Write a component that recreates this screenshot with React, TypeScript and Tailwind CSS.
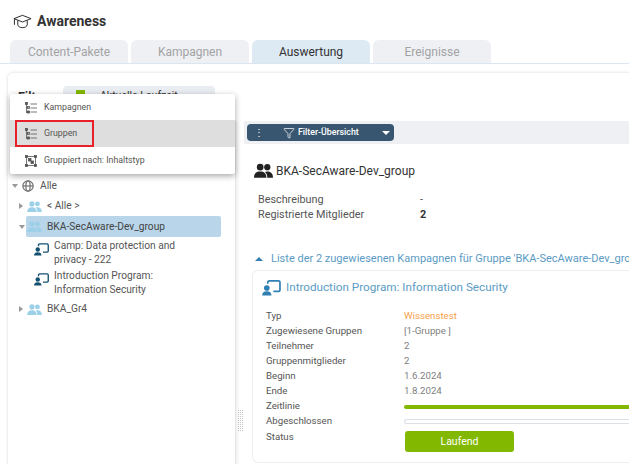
import { Filter } from 'lucide-react'

const tabs = ['Content-Pakete', 'Kampagnen', 'Auswertung', 'Ereignisse']

const details = [
  { label: 'Typ', value: 'Wissenstest', cls: 'text-[#f5a14a]' },
  { label: 'Zugewiesene Gruppen', value: '[1-Gruppe ]', cls: 'text-[#808080]' },
  { label: 'Teilnehmer', value: '2', cls: 'text-[#808080]' },
  { label: 'Gruppenmitglieder', value: '2', cls: 'text-[#808080]' },
  { label: 'Beginn', value: '1.6.2024', cls: 'text-[#808080]' },
  { label: 'Ende', value: '1.8.2024', cls: 'text-[#808080]' },
]

function GroupIcon({ className }: { className: string }) {
  return (
    <svg viewBox="0 0 20 15" className={className} fill="currentColor">
      <circle cx="6.500" cy="4" r="3.500" />
      <circle cx="14" cy="4" r="3.300" />
      <path d="M0 15c0-4.500 2.500-6.500 6.500-6.500S13 10.500 13 15z" />
      <path d="M14 15h6c0-4-2-6.500-6-6.500-1 0-1.800.2-2.500.5 1.600 1.300 2.500 3.300 2.500 6z" />
    </svg>
  )
}

function CampaignIcon({ className }: { className: string }) {
  return (
    <svg viewBox="0 0 20 17" className={className} fill="none">
      <path d="M6 4V2.500C6 1.700 6.700 1 7.500 1h10c.8 0 1.500.7 1.500 1.500v8c0 .8-.7 1.500-1.500 1.500H12" stroke="currentColor" strokeWidth="1.800" />
      <circle cx="5" cy="8.500" r="3" fill="currentColor" />
      <path d="M0 16.500c0-3 2-4.500 5-4.500s5 1.500 5 4.500z" fill="currentColor" />
    </svg>
  )
}

function TreeListIcon() {
  return (
    <svg viewBox="0 0 12 12" className="w-3 h-3 text-[#555]" fill="none" stroke="currentColor" strokeWidth="0.800">
      <path d="M1.500 1v10M1.500 5.500h2M1.500 10h2M5.500 2h6.500M5.500 6h6.500M5.500 10h6.500" />
      <rect x="0.500" y="0.500" width="2" height="2" fill="currentColor" />
      <rect x="2.500" y="4.500" width="2" height="2" />
      <rect x="2.500" y="9" width="2" height="2" fill="currentColor" />
    </svg>
  )
}

function Arrow({ open }: { open?: boolean }) {
  return open ? (
    <span className="block shrink-0 w-0 h-0 border-l-[3px] border-r-[3px] border-t-[4px] border-l-transparent border-r-transparent border-t-[#999]" />
  ) : (
    <span className="block shrink-0 w-0 h-0 border-t-[3px] border-b-[3px] border-l-[4px] border-t-transparent border-b-transparent border-l-[#999]" />
  )
}

function CampaignNode({ lines }: { lines: string[] }) {
  return (
    <div className="flex pl-[26px] h-[30px]">
      <CampaignIcon className="w-[15px] h-[13px] mt-[4px] text-[#14506f] shrink-0" />
      <div className="ml-[5px] text-[10.200px] leading-[14px] text-[#555]">
        {lines.map(l => (
          <div key={l}>{l}</div>
        ))}
      </div>
    </div>
  )
}

export default function App() {
  return (
    <div className="relative w-[629px] h-[464px] overflow-hidden bg-white font-['Roboto',sans-serif]">
      {/* Header */}
      <div className="flex items-center h-[40px] pl-[13px] pt-[2px]">
        <svg viewBox="0 0 20 15" className="w-[19px] h-[15px] text-[#222]" fill="none" stroke="currentColor" strokeWidth="1">
          <path d="M1 4.500 10 1l9 3.500L10 8z" />
          <path d="M5 6.500V11c0 1.500 2.500 3 5 3s5-1.500 5-3V6.500" />
          <path d="M1.500 5v6" />
        </svg>
        <span className="ml-[5px] text-[14px] font-bold text-[#333]">Awareness</span>
      </div>

      {/* Tabs */}
      <div className="flex gap-[3px] pl-[10px] h-[24px] border-b border-[#dbe6f0]">
        {tabs.map((t, i) => (
          <div
            key={t}
            className={`w-[118px] h-[23px] rounded-t-[6px] flex items-center justify-center text-[12px] ${
              i === 2 ? 'bg-[#dde9f3] text-[#333]' : 'bg-[#eef0f4] text-[#a3a3a3]'
            }`}
          >
            {t}
          </div>
        ))}
      </div>

      {/* Filter row */}
      <div className="ml-[7px] mt-[8px] h-[392px] rounded-tl-[6px] border-t border-l border-[#f0f0f0] shadow-[0_0_3px_rgba(0,0,0,0.08)]">
        <div className="flex items-start h-[48px] pl-[10px] pt-[13px]">
          <span className="mt-[3px] w-[45px] text-[12.500px] font-bold text-[#333] leading-[16px]">Filter</span>
          <div className="w-[152px] h-[20px] rounded-[4px] bg-[#e9edf1] flex items-center pl-[13px] text-[10.500px] text-[#333]">
            <span className="w-[9px] h-[13px] bg-[#82b900] mr-[15px] shrink-0" />
            Aktuelle Laufzeit
          </div>
        </div>

        <div className="flex h-[344px]">
          {/* Tree */}
          <div className="w-[228px] h-full pt-[55px] shrink-0 border-r border-[#e4e4e4] shadow-[2px_0_3px_rgba(0,0,0,0.06)]">
            <div className="flex items-center pl-[4px] h-[20px] text-[10.200px] text-[#555]">
              <Arrow open />
              <svg viewBox="0 0 14 14" className="w-[12px] h-[12px] ml-[4px] text-[#777]" fill="none" stroke="currentColor" strokeWidth="1.500">
                <circle cx="7" cy="7" r="6" />
                <ellipse cx="7" cy="7" rx="2.500" ry="6" />
                <path d="M1 7h12" />
              </svg>
              <span className="ml-[6px]">Alle</span>
            </div>
            <div className="flex items-center pl-[11px] h-[20px] text-[10.200px] text-[#555]">
              <Arrow />
              <GroupIcon className="w-[15px] h-[11px] ml-[4px] text-[#9cd0e8]" />
              <span className="ml-[5px]">&lt; Alle &gt;</span>
            </div>
            <div className="relative flex items-center ml-[18px] pl-[1px] w-[195px] h-[21px] rounded-[2px] bg-[#b8d5ea] text-[10.200px] text-[#444]">
              <span className="absolute -left-[7px] top-[9px]"><Arrow open /></span>
              <GroupIcon className="w-[15px] h-[11px] text-[#9cd0e8]" />
              <span className="ml-[5px]">BKA-SecAware-Dev_group</span>
            </div>
            <div className="h-[2px]" />
            <CampaignNode lines={['Camp: Data protection and', 'privacy - 222']} />
            <CampaignNode lines={['Introduction Program:', 'Information Security']} />
            <div className="flex items-center pl-[11px] h-[20px] text-[10.200px] text-[#555]">
              <Arrow />
              <GroupIcon className="w-[15px] h-[11px] ml-[4px] text-[#9cd0e8]" />
              <span className="ml-[5px]">BKA_Gr4</span>
            </div>
          </div>

          {/* Splitter */}
          <div className="w-[8px] shrink-0 flex items-center justify-center pt-[256px]">
            <svg width="5" height="22" className="text-[#c4c4c4]" fill="currentColor">
              <defs>
                <pattern id="grip" width="2" height="2" patternUnits="userSpaceOnUse">
                  <rect width="1" height="1" />
                </pattern>
              </defs>
              <rect width="5" height="22" fill="url(#grip)" />
            </svg>
          </div>

          {/* Details */}
          <div className="flex-1 min-w-0 overflow-hidden">
            <div className="h-[23px] bg-[#eef0f3] flex items-center pl-[3px]">
              <div className="relative w-[147px] h-[17px] rounded-[4px] bg-[#38566f] flex items-center text-white text-[8.800px] font-medium">
                <span className="absolute left-[7px] text-[10px] leading-none">⋮</span>
                <Filter className="w-[12px] h-[12px] ml-[36px] mr-[3px]" strokeWidth={1.500} />
                Filter-Übersicht
                <span className="absolute right-[4px] top-[7px] w-0 h-0 border-l-[4px] border-r-[4px] border-t-[4px] border-l-transparent border-r-transparent border-t-white" />
              </div>
            </div>

            <div className="flex items-center pl-[10px] mt-[18px] h-[17px] text-[12px] text-[#333]">
              <GroupIcon className="w-[19px] h-[15px] text-[#222]" />
              <span className="ml-[3px]">BKA-SecAware-Dev_group</span>
            </div>

            <div className="mt-[13px] pl-[14px] text-[10.800px] text-[#555] leading-[15px]">
              <div className="flex">
                <span className="w-[162px]">Beschreibung</span>
                <span>-</span>
              </div>
              <div className="flex">
                <span className="w-[162px]">Registrierte Mitglieder</span>
                <span className="font-bold text-[#333]">2</span>
              </div>
            </div>

            <div className="flex items-center pl-[11px] mt-[30px] h-[14px] whitespace-nowrap text-[11px] text-[#5b9bc4]">
              <span className="w-0 h-0 border-l-[4.500px] border-r-[4.500px] border-b-[4px] border-l-transparent border-r-transparent border-b-[#2f7fb3] mr-[8px]" />
              Liste der 2 zugewiesenen Kampagnen für Gruppe 'BKA-SecAware-Dev_group'
            </div>

            {/* Campaign card */}
            <div className="ml-[8px] mt-[4px] h-[193px] rounded-l-[6px] border border-r-0 border-[#eeeeee] pl-[9px] pt-[7px]">
              <div className="flex items-center h-[20px] text-[11.700px] text-[#5b9bc4]">
                <CampaignIcon className="w-[19px] h-[16px] text-[#2f7fb3]" />
                <span className="ml-[5px]">Introduction Program: Information Security</span>
              </div>
              <div className="mt-[11px] text-[9.700px] text-[#555]">
                {details.map(d => (
                  <div key={d.label} className="flex h-[15px] items-center">
                    <span className="w-[142px] pl-[4px]">{d.label}</span>
                    <span className={d.cls}>{d.value}</span>
                  </div>
                ))}
                <div className="flex h-[15px] items-center">
                  <span className="w-[142px] pl-[4px]">Zeitlinie</span>
                  <div className="flex-1 h-[4px] rounded-l-full bg-[#82b900]" />
                </div>
                <div className="flex h-[15px] items-center">
                  <span className="w-[142px] pl-[4px]">Abgeschlossen</span>
                  <div className="flex-1 h-[5px] rounded-l-full border border-r-0 border-[#dbe1e6] bg-white" />
                </div>
                <div className="flex h-[15px]">
                  <span className="w-[142px] pl-[4px] leading-[15px]">Status</span>
                  <div className="w-[109px] h-[21px] mt-[2px] ml-[1px] rounded-[3px] bg-[#82b900] flex items-center justify-center text-white text-[10.500px]">
                    Laufend
                  </div>
                </div>
              </div>
            </div>
          </div>
        </div>
      </div>

      {/* Dropdown menu */}
      <div className="absolute left-[10px] top-[94px] w-[225px] h-[80px] bg-white rounded-[2px] shadow-[0_2px_6px_rgba(0,0,0,0.35)] text-[8.800px] text-[#555]">
        <div className="flex items-center h-[26px] pl-[15px] pt-[1px]">
          <TreeListIcon />
          <span className="ml-[7px]">Kampagnen</span>
        </div>
        <div className="flex items-center h-[27px] pl-[15px] bg-[#dedede]">
          <TreeListIcon />
          <span className="ml-[7px]">Gruppen</span>
        </div>
        <div className="flex items-center h-[27px] pl-[15px]">
          <svg viewBox="0 0 12 12" className="w-3 h-3 text-[#555]" fill="none" stroke="currentColor" strokeWidth="0.800">
            <rect x="1.500" y="1.500" width="9" height="9" />
            <rect x="0.500" y="0.500" width="2" height="2" fill="currentColor" />
            <rect x="9.500" y="0.500" width="2" height="2" fill="currentColor" />
            <rect x="0.500" y="9.500" width="2" height="2" fill="currentColor" />
            <rect x="9.500" y="9.500" width="2" height="2" fill="currentColor" />
            <rect x="3.500" y="3.500" width="2.500" height="2.500" fill="currentColor" />
            <rect x="6" y="6" width="2.500" height="2.500" fill="currentColor" />
          </svg>
          <span className="ml-[7px]">Gruppiert nach: Inhaltstyp</span>
        </div>
      </div>

      {/* Highlight box */}
      <div className="absolute left-[15px] top-[120px] w-[79px] h-[27px] border-2 border-[#e8202a]" />
    </div>
  )
}
